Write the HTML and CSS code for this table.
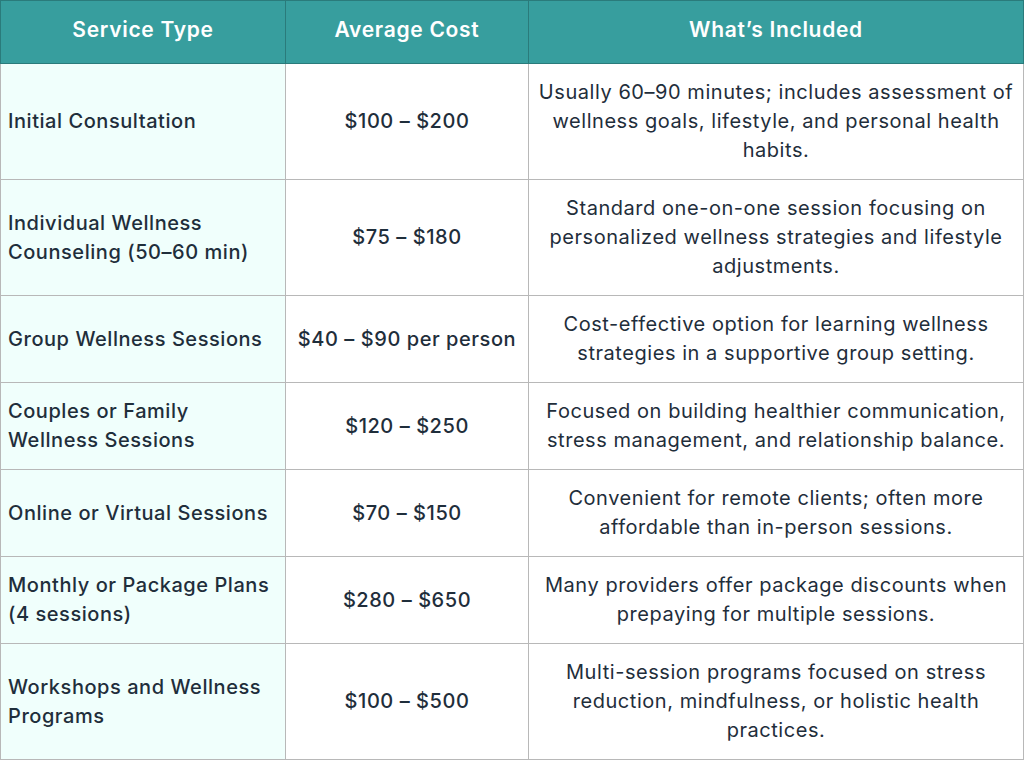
FILE: index.html
```html
<!DOCTYPE html>
<html>
<head>
<meta charset="utf-8">
<link rel="stylesheet" href="styles.css">
</head>
<body>
<table class="cost-table">
  <colgroup>
    <col class="c1"><col class="c2"><col class="c3">
  </colgroup>
  <thead>
    <tr><th>Service Type</th><th>Average Cost</th><th>What’s Included</th></tr>
  </thead>
  <tbody>
    <tr class="tall"><td class="svc">Initial Consultation</td><td class="cost">$100 – $200</td><td class="desc">Usually 60–90 minutes; includes assessment of wellness goals, lifestyle, and personal health habits.</td></tr>
    <tr class="tall"><td class="svc">Individual Wellness Counseling (50–60 min)</td><td class="cost">$75 – $180</td><td class="desc">Standard one-on-one session focusing on personalized wellness strategies and lifestyle adjustments.</td></tr>
    <tr><td class="svc">Group Wellness Sessions</td><td class="cost">$40 – $90 per person</td><td class="desc">Cost-effective option for learning wellness strategies in a supportive group setting.</td></tr>
    <tr><td class="svc">Couples or Family Wellness Sessions</td><td class="cost">$120 – $250</td><td class="desc">Focused on building healthier communication, stress management, and relationship balance.</td></tr>
    <tr><td class="svc">Online or Virtual Sessions</td><td class="cost">$70 – $150</td><td class="desc">Convenient for remote clients; often more affordable than in-person sessions.</td></tr>
    <tr><td class="svc">Monthly or Package Plans (4 sessions)</td><td class="cost">$280 – $650</td><td class="desc">Many providers offer package discounts when prepaying for multiple sessions.</td></tr>
    <tr class="tall"><td class="svc">Workshops and Wellness Programs</td><td class="cost">$100 – $500</td><td class="desc">Multi-session programs focused on stress reduction, mindfulness, or holistic health practices.</td></tr>
  </tbody>
</table>
</body>
</html>
```
FILE: styles.css
```css
html, body {
  margin: 0;
  padding: 0;
  background: #ffffff;
}
body {
  font-family: "Inter", "Noto Sans", sans-serif;
  color: #1f2e3b;
}
.cost-table {
  width: 1023px;
  border-collapse: collapse;
  table-layout: fixed;
  font-size: 20px;
  line-height: 29px;
  letter-spacing: 0.55px;
}
.c1 { width: 285px; }
.c2 { width: 243px; }
.c3 { width: 495px; }
.cost-table th {
  background: #379e9e;
  color: #ffffff;
  font-size: 21px;
  font-weight: 600;
  letter-spacing: 0.7px;
  height: 56px;
  padding: 0 8px 6px;
  border: 1px solid #2a7b7b;
  text-align: center;
  vertical-align: middle;
}
.cost-table td {
  border: 1px solid #b8b8b8;
  padding: 0 7px;
  height: 86px;
  vertical-align: middle;
}
.cost-table tr.tall td {
  height: 115px;
}
.svc {
  background: #f0fffc;
  font-weight: 500;
  text-align: left;
}
.cost {
  font-weight: 500;
  text-align: center;
}
.desc {
  font-weight: 400;
  text-align: center;
}
```
